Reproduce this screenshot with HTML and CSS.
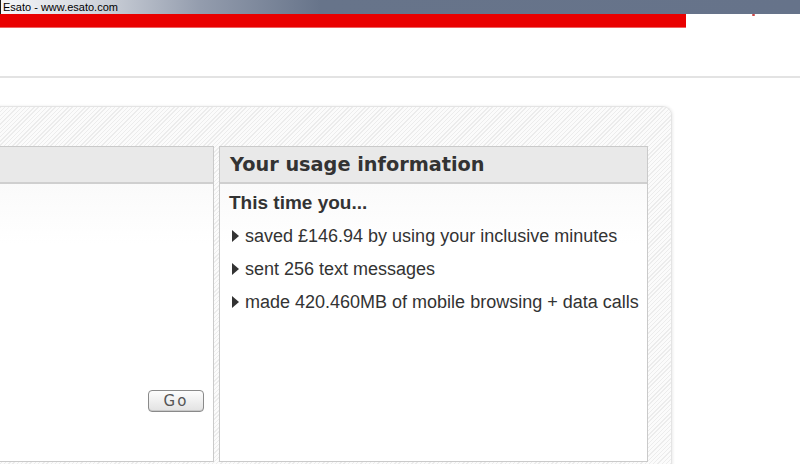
FILE: index.html
```html
<!DOCTYPE html>
<html lang="en">
<head>
    <title>Your usage information</title>
    <meta charset="UTF-8">
    <link rel="stylesheet" href="styles.css">
</head>
<body>
    <div class="titlebar">Esato - www.esato.com</div>

    <div class="masthead">
        <div class="redbar"></div>
        <span class="dot"></span>
    </div>
    <div class="rule"></div>

    <div class="panel">
        <div class="box box-left">
            <div class="box-head"></div>
            <div class="box-body left-body">
                <button class="go">Go</button>
            </div>
        </div>
        <div class="box box-right">
            <h2 class="box-head">Your usage information</h2>
            <div class="box-body">
                <h3>This time you...</h3>
                <ul class="usage">
                    <li>saved £146.94 by using your inclusive minutes</li>
                    <li>sent 256 text messages</li>
                    <li>made 420.460MB of mobile browsing + data calls</li>
                </ul>
            </div>
        </div>
    </div>
</body>
</html>
```

FILE: styles.css
```css
body {
    margin: 0;
    font-family: "Liberation Sans", Arial, sans-serif;
    background-color: #fff;
    overflow: hidden;
}
.titlebar {
    height: 14px;
    box-sizing: border-box;
    border-left: 1px solid #1a1a1a;
    padding-left: 2px;
    font: 11px/14px "Liberation Sans", Arial, sans-serif;
    color: #000;
    background: linear-gradient(to right, #f6f7f9 0, #d3d7de 90px, #939cad 200px, #67748a 320px, #66738a 100%);
}
.masthead {
    height: 62px;
    display: flex;
    align-items: flex-start;
}
.redbar {
    width: 686px;
    height: 13px;
    background-color: #e90000;
    border-bottom: 1px solid #f06060;
}
.dot {
    margin-left: 66px;
    width: 3px;
    height: 2px;
    background-color: #c44;
    border-radius: 1px;
}
.rule {
    height: 2px;
    background-color: #e3e3e3;
    margin-bottom: 28px;
}
.panel {
    margin-left: -20px;
    width: 692px;
    height: 360px;
    box-sizing: border-box;
    display: flex;
    gap: 5px;
    padding: 39px 22px 0 0;
    border: 1px solid #e4e4e4;
    border-left: none;
    border-bottom: none;
    border-radius: 0 9px 0 0;
    box-shadow: 1px 0 3px rgba(0,0,0,0.08);
    background: repeating-linear-gradient(135deg, #fbfbfb 0 2px, #ececec 2px 3px);
}
.box {
    height: 316px;
    box-sizing: border-box;
    border: 1px solid #cacaca;
    background-color: #fff;
    display: flex;
    flex-direction: column;
}
.box-left {
    width: 234px;
}
.box-right {
    width: 429px;
}
.box-head {
    height: 37px;
    box-sizing: border-box;
    margin: 0;
    padding-left: 10px;
    background-color: #e9e9e9;
    border-bottom: 2px solid #cfcfcf;
    font: bold 19.3px/35px "DejaVu Sans", Verdana, sans-serif;
    color: #333;
}
.box-body {
    flex: 1;
    padding: 7px 0 0 9px;
    background: linear-gradient(#fafafa, #fff 60px);
}
.box-body h3 {
    margin: 0 0 5px;
    font-size: 19px;
    line-height: 24px;
    color: #333;
}
.usage {
    list-style: none;
    margin: 0;
    padding: 0;
}
.usage li {
    position: relative;
    padding-left: 16px;
    font-size: 18px;
    line-height: 33px;
    white-space: nowrap;
    color: #333;
}
.usage li::before {
    content: "";
    position: absolute;
    left: 3px;
    top: 10px;
    border-left: 7px solid #333;
    border-top: 6px solid transparent;
    border-bottom: 6px solid transparent;
}
.left-body {
    display: flex;
    align-items: flex-end;
    justify-content: flex-end;
    padding: 0 9px 49px 0;
}
.go {
    width: 56px;
    height: 22px;
    padding: 0;
    font: 15px "DejaVu Sans", Verdana, sans-serif;
    letter-spacing: 2px;
    color: #555;
    border: 1px solid #8a8a8a;
    border-radius: 4px;
    background: linear-gradient(#fdfdfd, #e2e2e2);
    box-shadow: inset 0 -1px #c8c8c8;
}
```
